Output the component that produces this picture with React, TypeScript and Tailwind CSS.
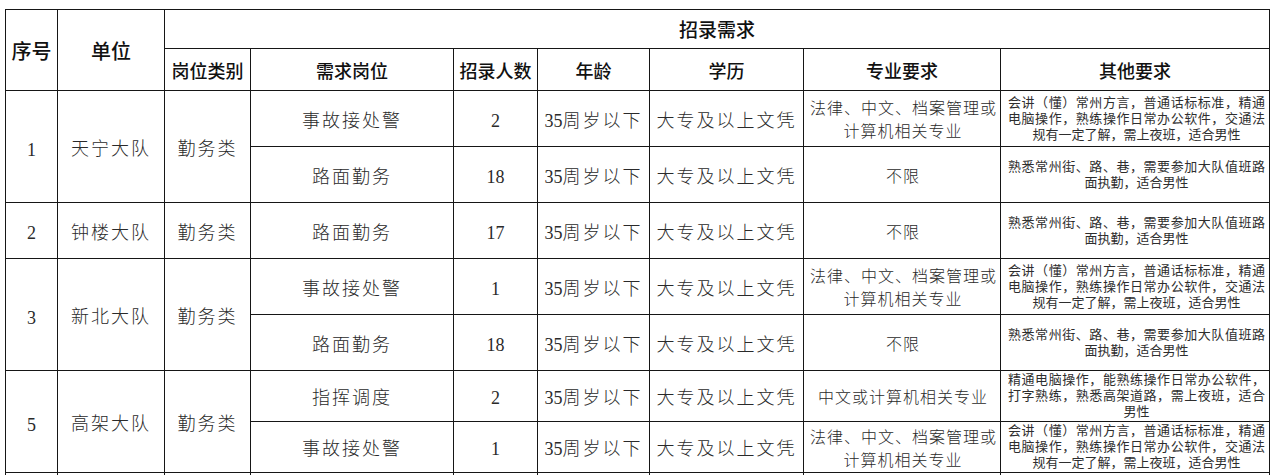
import React from "react";

const H = "[font-family:'Noto_Sans_CJK_SC',sans-serif] font-medium text-[#111]";
const B = "[font-family:'Liberation_Serif','Noto_Sans_CJK_SC',serif] text-[#2a2a2a]";

function C({ children, className = "" }: { children?: React.ReactNode; className?: string }) {
  return (
    <div className={"bg-white flex items-center justify-center text-center " + className}>
      {children}
    </div>
  );
}

function T({ children, className = "" }: { children?: React.ReactNode; className?: string }) {
  return (
    <C className={B + " text-[18px] tracking-[2px] pt-[5px] whitespace-nowrap " + className}>
      <span className="font-light">{children}</span>
    </C>
  );
}

function Num({ n }: { n: string }) {
  return <C className={B + " text-[18px] pt-[5px]"}>{n}</C>;
}

function Age() {
  return (
    <C className={B + " text-[18px] pt-[5px] whitespace-nowrap"}>
      <span>35</span>
      <span className="font-light tracking-[2px]">周岁以下</span>
    </C>
  );
}

function Edu() {
  return <T>大专及以上文凭</T>;
}

function Major({ lines }: { lines: string[] }) {
  return (
    <C className={B + " text-[16px] leading-[23px] pt-[3px]"}>
      <div className="w-full pl-[6px] pr-[4px] font-light">
        {lines.map((l, i) =>
          i < lines.length - 1 ? (
            <div key={i} className="text-justify [text-align-last:justify]">{l}</div>
          ) : (
            <div key={i} className="text-center tracking-[1px]">{l}</div>
          )
        )}
      </div>
    </C>
  );
}

function Other({ lines }: { lines: string[] }) {
  return (
    <C className={B + " text-[13px] leading-[16px] text-[#2e2e2e]"}>
      <div className="w-full pl-[7px] pr-[4px]">
        {lines.map((l, i) =>
          i < lines.length - 1 ? (
            <div key={i} className="text-justify [text-align-last:justify]">{l}</div>
          ) : (
            <div key={i} className="text-center">{l}</div>
          )
        )}
      </div>
    </C>
  );
}

const otherA = ["会讲（懂）常州方言，普通话标标准，精通", "电脑操作，熟练操作日常办公软件，交通法", "规有一定了解，需上夜班，适合男性"];
const otherB = ["熟悉常州街、路、巷，需要参加大队值班路", "面执勤，适合男性"];
const otherC = ["精通电脑操作，能熟练操作日常办公软件，", "打字熟练，熟悉高架道路，需上夜班，适合", "男性"];
const majorA = ["法律、中文、档案管理或", "计算机相关专业"];

export default function App() {
  return (
    <div className="w-[1280px] h-[475px] overflow-hidden bg-white pt-[9px] pl-[5px]">
      <div className="grid w-fit gap-px bg-[#161616] p-px grid-cols-[51px_106px_85px_202px_83px_111px_153px_196px_268px] grid-rows-[38px_41px_55px_55px_55px_55px_55px_50px_50px_55px]">
        {/* header */}
        <C className={H + " row-span-2 text-[20px] pt-[2px]"}>序号</C>
        <C className={H + " row-span-2 text-[20px] pt-[2px]"}>单位</C>
        <C className={H + " col-span-7 text-[19px]"}>招录需求</C>
        <C className={H + " text-[18px] pt-[2px]"}>岗位类别</C>
        <C className={H + " text-[18px] pt-[2px]"}>需求岗位</C>
        <C className={H + " text-[18px] pt-[2px]"}>招录人数</C>
        <C className={H + " text-[18px] pt-[2px]"}>年龄</C>
        <C className={H + " text-[18px] pt-[2px]"}>学历</C>
        <C className={H + " text-[18px] pt-[2px]"}>专业要求</C>
        <C className={H + " text-[18px] pt-[2px]"}>其他要求</C>

        {/* 1 天宁大队 */}
        <C className={B + " row-span-2 text-[18px] pt-[7px]"}>1</C>
        <T className="row-span-2">天宁大队</T>
        <T className="row-span-2">勤务类</T>
        <T>事故接处警</T>
        <Num n="2" />
        <Age />
        <Edu />
        <Major lines={majorA} />
        <Other lines={otherA} />
        <T>路面勤务</T>
        <Num n="18" />
        <Age />
        <Edu />
        <Major lines={["不限"]} />
        <Other lines={otherB} />

        {/* 2 钟楼大队 */}
        <C className={B + " text-[18px] pt-[5px]"}>2</C>
        <T>钟楼大队</T>
        <T>勤务类</T>
        <T>路面勤务</T>
        <Num n="17" />
        <Age />
        <Edu />
        <Major lines={["不限"]} />
        <Other lines={otherB} />

        {/* 3 新北大队 */}
        <C className={B + " row-span-2 text-[18px] pt-[7px]"}>3</C>
        <T className="row-span-2">新北大队</T>
        <T className="row-span-2">勤务类</T>
        <T>事故接处警</T>
        <Num n="1" />
        <Age />
        <Edu />
        <Major lines={majorA} />
        <Other lines={otherA} />
        <T>路面勤务</T>
        <Num n="18" />
        <Age />
        <Edu />
        <Major lines={["不限"]} />
        <Other lines={otherB} />

        {/* 5 高架大队 */}
        <C className={B + " row-span-2 text-[18px] pt-[7px]"}>5</C>
        <T className="row-span-2">高架大队</T>
        <T className="row-span-2">勤务类</T>
        <T>指挥调度</T>
        <Num n="2" />
        <Age />
        <Edu />
        <Major lines={["中文或计算机相关专业"]} />
        <Other lines={otherC} />
        <T>事故接处警</T>
        <Num n="1" />
        <Age />
        <Edu />
        <Major lines={majorA} />
        <Other lines={otherA} />

        {/* next row (cut off) */}
        <C />
        <C />
        <C />
        <C />
        <C />
        <C />
        <C />
        <C />
        <C />
      </div>
    </div>
  );
}
